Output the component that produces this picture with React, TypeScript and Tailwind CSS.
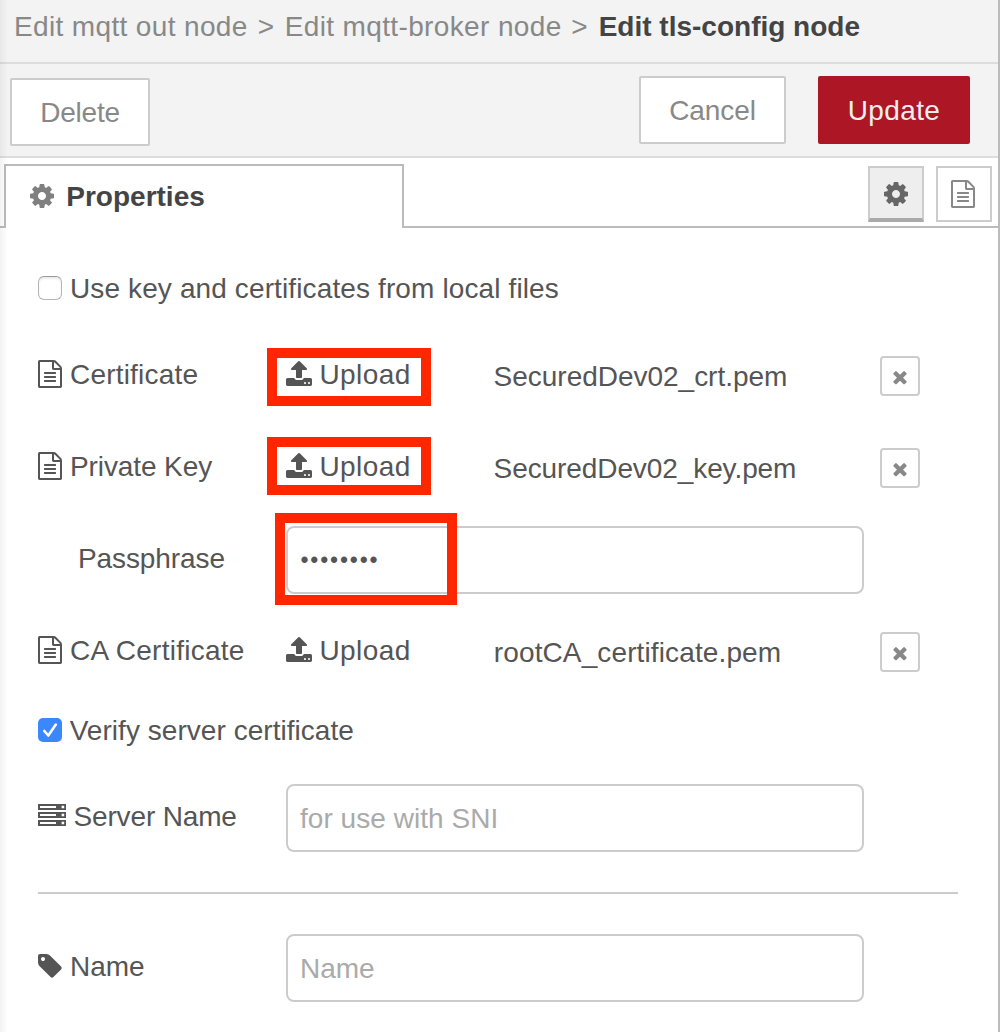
import React from "react";

const PATHS = {
  cog: "M1152 896q0-106-75-181t-181-75-181 75-75 181 75 181 181 75 181-75 75-181zm512-109v222q0 12-8 23t-20 13l-185 28q-19 54-39 91 35 50 107 138 10 12 10 25t-9 23q-27 37-99 108t-94 71q-12 0-26-9l-138-108q-44 23-91 38-16 136-29 186-7 28-36 28h-222q-14 0-24.5-8.5t-11.5-21.5l-28-184q-49-16-90-37l-141 107q-10 9-25 9-14 0-25-11-126-114-165-168-7-10-7-23 0-12 8-23 15-21 51-66.500t54-70.500q-27-50-41-99l-183-27q-13-2-21-12.500t-8-23.500v-222q0-12 8-23t19-13l186-28q14-46 39-92-40-57-107-138-10-12-10-24 0-10 9-23 26-36 98.500-107.500t94.500-71.500q13 0 26 10l138 107q44-23 91-38 16-136 29-186 7-28 36-28h222q14 0 24.500 8.500t11.500 21.500l28 184q49 16 90 37l142-107q9-9 24-9 13 0 25 10 129 119 165 170 7 8 7 22 0 12-8 23-15 21-51 66.500t-54 70.500q26 50 41 98l183 28q13 2 21 12.500t8 23.500z",
  file: "M1596 380q28 28 48 76t20 88v1152q0 40-28 68t-68 28h-1344q-40 0-68-28t-28-68v-1600q0-40 28-68t68-28h896q40 0 88 20t76 48zm-444-244v376h376q-10-29-22-41l-313-313q-12-12-41-22zm384 1528v-1024h-416q-40 0-68-28t-28-68v-416h-768v1536h1280zm-1024-864q0-14 9-23t23-9h704q14 0 23 9t9 23v64q0 14-9 23t-23 9h-704q-14 0-23-9t-9-23v-64zm736 224q14 0 23 9t9 23v64q0 14-9 23t-23 9h-704q-14 0-23-9t-9-23v-64q0-14 9-23t23-9h704zm0 256q14 0 23 9t9 23v64q0 14-9 23t-23 9h-704q-14 0-23-9t-9-23v-64q0-14 9-23t23-9h704z",
  upload: "M1344 1472q0-26-19-45t-45-19-45 19-19 45 19 45 45 19 45-19 19-45zm256 0q0-26-19-45t-45-19-45 19-19 45 19 45 45 19 45-19 19-45zm128-224v320q0 40-28 68t-68 28h-1472q-40 0-68-28t-28-68v-320q0-40 28-68t68-28h427q21 56 70.500 92t110.500 36h256q61 0 110.500-36t70.500-92h427q40 0 68 28t28 68zm-325-648q-17 40-59 40h-256v448q0 26-19 45t-45 19h-256q-26 0-45-19t-19-45v-448h-256q-42 0-59-40-17-39 14-69l448-448q18-19 45-19t45 19l448 448q31 30 14 69z",
  tag: "M576 448q0-53-37.500-90.500t-90.500-37.500-90.500 37.500-37.500 90.500 37.500 90.500 90.500 37.500 90.500-37.500 37.500-90.500zm1067 576q0 53-37 90l-491 492q-39 37-91 37-53 0-90-37l-715-716q-38-37-64.500-101t-26.500-117v-416q0-52 38-90t90-38h416q53 0 117 26.500t102 64.500l715 714q37 39 37 91z",
  times: "M1490 1322q0 40-28 68l-136 136q-28 28-68 28t-68-28l-294-294-294 294q-28 28-68 28t-68-28l-136-136q-28-28-28-68t28-68l294-294-294-294q-28-28-28-68t28-68l136-136q28-28 68-28t68 28l294 294 294-294q28-28 68-28t68 28l136 136q28 28 28 68t-28 68l-294 294 294 294q28 28 28 68z",
};

function Icon({ name, className }: { name: keyof typeof PATHS; className: string }) {
  return (
    <svg viewBox="0 0 1792 1792" fill="currentColor" className={`shrink-0 ${className}`}>
      <path d={PATHS[name]} />
    </svg>
  );
}

function ServerIcon() {
  return (
    <svg viewBox="0 0 28 28" fill="currentColor" className="size-7 shrink-0">
      {[2, 10, 18].map((y) => (
        <path
          key={y}
          fillRule="evenodd"
          d={`M0 ${y}h28v6h-28zM2 ${y + 2}v2h16v-2zM23.600 ${y + 1.7}v2.600h2.600v-2.600z`}
        />
      ))}
    </svg>
  );
}

function FileLabel({ text, tracking }: { text: string; tracking: string }) {
  return (
    <div className="flex w-[247px] shrink-0 items-center pb-1">
      <Icon name="file" className="-ml-0.5 size-7" />
      <span className={`ml-1.5 pt-0.5 ${tracking}`}>{text}</span>
    </div>
  );
}

function FileRow(props: {
  label: string;
  tracking: string;
  file: string;
  fileTracking: string;
  fileIndent: string;
  frame?: string;
}) {
  return (
    <div className="flex h-[68px] items-center">
      <FileLabel text={props.label} tracking={props.tracking} />
      <div className="relative flex h-[68px] w-[208px] shrink-0 items-center pb-1">
        <Icon name="upload" className="-ml-[0.500px] size-7" />
        <span className="ml-[7px] pt-0.5 tracking-[0.4px]">Upload</span>
        {props.frame && (
          <div className={`absolute -left-[18px] h-[58px] w-[164px] border-[10px] border-[#ff2600] ${props.frame}`} />
        )}
      </div>
      <div className={`w-[387px] shrink-0 pt-0.5 ${props.fileIndent} ${props.fileTracking}`}>{props.file}</div>
      <button className="flex size-10 items-center justify-center rounded-[4px] border-2 border-[#ccc] text-[#888]">
        <Icon name="times" className="mt-px size-5" />
      </button>
    </div>
  );
}

function Field({ text, tracking }: { text: string; tracking: string }) {
  return (
    <div className={`flex h-[68px] w-[578px] items-center rounded-[8px] border-2 border-[#ccc] pt-0.5 pl-3 text-[#aaa] ${tracking}`}>
      {text}
    </div>
  );
}

export default function App() {
  return (
    <div className="relative h-[1032px] w-[1000px] overflow-hidden whitespace-nowrap border-r-2 border-[#bbb] bg-white font-['Liberation_Sans',Arial,sans-serif] text-[28px] leading-10 text-[#555]">
      <header className="flex h-16 border-b-2 border-[#ddd] bg-[#f3f3f3] pt-[7px] pl-3.5 text-[#888]">
        <span className="w-[243.700px] tracking-[0.36px]">Edit mqtt out node</span>
        <span className="w-[27px]">&gt;</span>
        <span className="w-[286.500px] tracking-[0.367px]">Edit mqtt-broker node</span>
        <span className="w-[27.500px]">&gt;</span>
        <span className="font-bold text-[#444]">Edit tls-config node</span>
      </header>

      <div className="flex h-[94px] border-b-2 border-[#ddd] bg-[#f3f3f3] pt-3 pr-7 pl-2.5 text-[#888]">
        <button className="mt-0.5 h-[68px] w-[140px] rounded-[2px] border-2 border-[#ccc] bg-white pt-0.5 tracking-[-0.213px]">Delete</button>
        <button className="ml-auto h-[68px] w-[147px] rounded-[2px] border-2 border-[#ccc] bg-white pt-0.5 tracking-[-0.1px]">Cancel</button>
        <button className="ml-8 h-[68px] w-[152px] rounded-[2px] bg-[#ad1625] pt-0.5 tracking-[0.35px] text-[#eee]">Update</button>
      </div>

      <div className="flex h-[70px] items-end">
        <div className="h-0.5 w-[5px] rounded-br-[2px] bg-[#bbb]" />
        <div className="-ml-px flex h-16 w-[400px] items-center border-2 border-b-0 border-[#bbb] pl-[22px]">
          <Icon name="cog" className="mb-0.5 size-7 text-[#808080]" />
          <span className="ml-[10.300px] font-bold text-[#444]">Properties</span>
        </div>
        <div className="-ml-px flex h-[70px] flex-1 justify-end gap-3 rounded-bl-[2px] border-b-2 border-[#bbb] pt-2 pr-1.5">
          <button className="flex size-14 items-center justify-center border-2 border-b-4 border-[#ccc] border-b-[#aaa] bg-[#eee] pt-0.5 text-[#666]">
            <Icon name="cog" className="mr-px size-7" />
          </button>
          <button className="flex size-14 items-center justify-center border-2 border-[#ccc] text-[#888]">
            <Icon name="file" className="mr-0.5 size-7" />
          </button>
        </div>
      </div>

      <main className="pt-10 pl-[38px]">
        <label className="flex h-10 items-center">
          <span className="size-6 rounded-[6px] border border-[#b5b5b5] border-t-[#999] shadow-[inset_0_2px_2px_#00000014]" />
          <span className="ml-2 pt-0.5 tracking-[0.12px]">Use key and certificates from local files</span>
        </label>

        <div className="mt-[34px] flex flex-col gap-6">
          <FileRow label="Certificate" tracking="tracking-[0.2px]" file="SecuredDev02_crt.pem" fileTracking="tracking-[-0.02px]" fileIndent="pl-[0.600px]" frame="top-1.5" />
          <FileRow label="Private Key" tracking="tracking-[-0.1px]" file="SecuredDev02_key.pem" fileTracking="tracking-[-0.09px]" fileIndent="pl-[0.600px]" frame="top-[3px]" />
          <div className="flex h-[68px] items-center">
            <div className="w-[248px] shrink-0 pb-0.5 pl-10 tracking-[-0.1px]">Passphrase</div>
            <div className="relative flex h-[68px] w-[578px] items-center rounded-[8px] border-2 border-[#ccc] pl-[12.500px]">
              <span className="text-[23px] tracking-[1.82px]">••••••••</span>
              <div className="absolute -top-[15px] -left-[13px] h-[92px] w-[182px] border-[10px] border-[#ff2600]" />
            </div>
          </div>
          <FileRow label="CA Certificate" tracking="tracking-[0.24px]" file="rootCA_certificate.pem" fileTracking="tracking-[0.121px]" fileIndent="pl-[0.800px]" />
        </div>

        <label className="mt-6 flex h-10 items-center">
          <span className="flex size-6 items-center justify-center rounded-[5px] bg-[#3b87fd]">
            <svg viewBox="0 0 24 24" className="size-6" fill="none" stroke="#fff" strokeWidth="2.600" strokeLinecap="round" strokeLinejoin="round">
              <path d="M6.300 13L10.300 17.500L17.800 6.500" />
            </svg>
          </span>
          <span className="ml-[7.700px] pt-0.5 tracking-[0.041px]">Verify server certificate</span>
        </label>

        <div className="mt-[34px] flex h-[68px] items-center">
          <div className="flex w-[248px] shrink-0 items-center pb-1">
            <ServerIcon />
            <span className="ml-[7.500px] pt-0.5 tracking-[-0.15px]">Server Name</span>
          </div>
          <Field text="for use with SNI" tracking="tracking-[0.04px]" />
        </div>

        <div className="mt-10 h-0.5 w-[920px] bg-[#ccc]" />

        <div className="mt-10 flex h-[68px] items-center">
          <div className="flex w-[248px] shrink-0 items-center pb-1">
            <Icon name="tag" className="-ml-0.5 size-7" />
            <span className="ml-1.5 pt-0.5">Name</span>
          </div>
          <Field text="Name" tracking="tracking-normal" />
        </div>
      </main>

      <div className="pointer-events-none absolute inset-y-0 left-0 w-2 bg-gradient-to-r from-black/5 to-transparent" />
    </div>
  );
}
